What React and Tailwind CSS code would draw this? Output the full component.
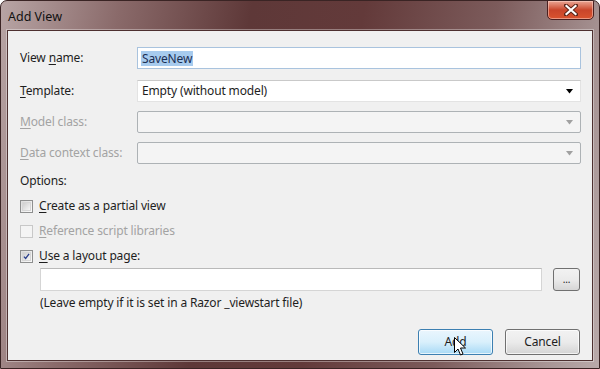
import React from "react";

const U = ({ children }) => <span className="underline underline-offset-2">{children}</span>;

function Arrow({ disabled }) {
  return (
    <svg width="8" height="5" viewBox="0 0 8 5" className="shrink-0">
      <path d="M0 0 H7 L3.5 4.5 Z" fill={disabled ? "#a0a0a0" : "#000"} />
    </svg>
  );
}

function Checkbox({ checked, disabled }) {
  return (
    <div
      className={
        "w-[13px] h-[13px] border flex items-center justify-center shrink-0 " +
        (disabled
          ? "border-[#c8c8c8] bg-[#f4f4f4]"
          : "border-[#8e8f8f] bg-gradient-to-br from-[#dcdcdc] to-[#fbfbfb]")
      }
    >
      {!disabled && (
        <div className="w-[9px] h-[9px] border border-[#d6d6d6] bg-gradient-to-br from-[#cfcfcf] to-[#f6f6f6] flex items-center justify-center">
          {checked && (
            <svg width="9" height="9" viewBox="0 0 9 9">
              <path d="M1.2 4.6 L3.4 7 L7.8 1.2" fill="none" stroke="#2a3f8c" strokeWidth="1.7" />
            </svg>
          )}
        </div>
      )}
    </div>
  );
}

export default function App() {
  return (
    <div
      className="w-[600px] h-[369px] relative overflow-hidden rounded-t-[7px] border border-[#3a2424] bg-[linear-gradient(100deg,#b8a5a5_0%,#8a6a6a_18%,#5e3838_38%,#633a3a_55%,#7c5b5b_75%,#a89595_92%,#b9aaaa_100%)] flex flex-col"
      style={{ fontFamily: "'Noto Sans', 'Open Sans', sans-serif" }}
    >
      {/* title bar */}
      <div className="h-[29px] shrink-0 flex items-start justify-between pl-[7px] pr-[5px]">
        <div className="pt-[7px] text-[12.5px] text-[#111]">Add View</div>
        <div className="w-[47px] h-[20px] mt-[-1px] rounded-b-[5px] border border-[#4a2020] bg-gradient-to-b from-[#e9a594] via-[#c9452a] to-[#d9532f] flex items-center justify-center shadow-[inset_0_0_0_1px_rgba(255,220,210,0.5)]">
          <svg width="14" height="12" viewBox="0 0 14 12">
            <path d="M2 1.5 L12 10.5 M12 1.5 L2 10.5" stroke="#5a2418" strokeWidth="4" strokeLinecap="square" />
            <path d="M2.5 2 L11.5 10 M11.5 2 L2.5 10" stroke="#fff" strokeWidth="2.2" strokeLinecap="square" />
          </svg>
        </div>
      </div>

      {/* content panel */}
      <div className="mx-[6px] h-[331px] border border-[#4d3030] shadow-[0_0_0_1px_rgba(255,255,255,0.35)] bg-[#f0f0f0] pl-[12px] pr-[11px] pt-[16px] text-[12px] tracking-[-0.15px] text-[#1e1e1e] relative">
        <div className="flex flex-col">
          <div className="flex items-center h-[22px]">
            <div className="w-[117px]">View <U>n</U>ame:</div>
            <div className="flex-1 h-[22px] border border-[#a9c3de] bg-white flex items-center px-[3px]">
              <span className="bg-[#a7cbee] text-[#1b2e52] px-[1px] leading-[15px]">SaveNew</span>
            </div>
          </div>
          <div className="flex items-center h-[22px] mt-[11px]">
            <div className="w-[117px]"><U>T</U>emplate:</div>
            <div className="flex-1 h-[22px] border border-[#e3e3e3] border-t-[#c9c9c9] bg-white flex items-center justify-between pl-[4px] pr-[6px]">
              <span>Empty (without model)</span>
              <Arrow />
            </div>
          </div>
          <div className="flex items-center h-[22px] mt-[9px] text-[#a3a3a3]">
            <div className="w-[117px]"><U>M</U>odel class:</div>
            <div className="flex-1 h-[22px] border border-[#adb2b5] bg-[#f4f4f4] rounded-[2px] flex items-center justify-end pr-[6px]">
              <Arrow disabled />
            </div>
          </div>
          <div className="flex items-center h-[22px] mt-[9px] text-[#a3a3a3]">
            <div className="w-[117px]"><U>D</U>ata context class:</div>
            <div className="flex-1 h-[22px] border border-[#adb2b5] bg-[#f4f4f4] rounded-[2px] flex items-center justify-end pr-[6px]">
              <Arrow disabled />
            </div>
          </div>

          <div className="mt-[8px] h-[18px] flex items-center">Options:</div>
          <div className="mt-[7px] h-[18px] flex items-center gap-[6px]">
            <Checkbox />
            <span><U>C</U>reate as a partial view</span>
          </div>
          <div className="mt-[7px] h-[18px] flex items-center gap-[6px] text-[#a3a3a3]">
            <Checkbox disabled />
            <span><U>R</U>eference script libraries</span>
          </div>
          <div className="mt-[7px] h-[18px] flex items-center gap-[6px]">
            <Checkbox checked />
            <span><U>U</U>se a layout page:</span>
          </div>
          <div className="mt-[3px] ml-[20px] flex items-center gap-[11px] h-[23px]">
            <div className="flex-1 h-[23px] border border-[#d5d5d5] border-t-[#b9b9b9] bg-white" />
            <div className="w-[27px] h-[23px] mr-[1px] rounded-[3px] border border-[#707070] bg-gradient-to-b from-[#f2f2f2] via-[#ebebeb] to-[#d6d6d6] flex items-center justify-center text-[10px] leading-none pb-[2px]">
              ...
            </div>
          </div>
          <div className="mt-[3px] ml-[20px] h-[18px] flex items-center">(Leave empty if it is set in a Razor _viewstart file)</div>

          <div className="mt-[17px] pr-[1px] flex justify-end gap-[12px]">
            <div className="w-[75px] h-[26px] rounded-[3px] border border-[#3c7fb1] bg-gradient-to-b from-[#eaf6fd] via-[#d9f0fc] to-[#a7d9f5] shadow-[inset_0_0_0_1px_rgba(255,255,255,0.7)] flex items-center justify-center relative">
              Add
              <svg className="absolute left-[35px] top-[7px]" width="13" height="20" viewBox="0 0 13 20">
                <path d="M0.5 0.5 V15.5 L4 12 L6.5 18 L9 17 L6.5 11 L11.5 11 Z" fill="#fff" stroke="#000" strokeWidth="1" strokeLinejoin="round" />
              </svg>
            </div>
            <div className="w-[75px] h-[26px] rounded-[3px] border border-[#707070] bg-gradient-to-b from-[#f2f2f2] via-[#ebebeb] to-[#d4d4d4] shadow-[inset_0_0_0_1px_rgba(255,255,255,0.7)] flex items-center justify-center">
              Cancel
            </div>
          </div>
        </div>
      </div>
    </div>
  );
}
